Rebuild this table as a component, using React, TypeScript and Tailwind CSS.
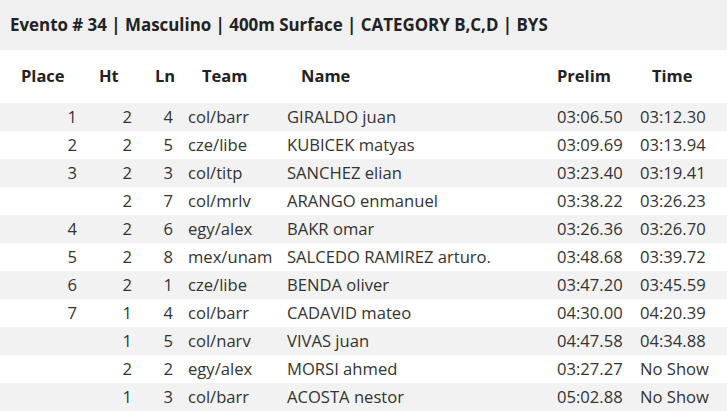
import React from 'react'

type Row = {
    place: string;
    ht: string;
    ln: string;
    team: string;
    name: string;
    prelim: string;
    time: string;
};

const rows: Row[] = [
    { place: '1', ht: '2', ln: '4', team: 'col/barr', name: 'GIRALDO juan', prelim: '03:06.50', time: '03:12.30' },
    { place: '2', ht: '2', ln: '5', team: 'cze/libe', name: 'KUBICEK matyas', prelim: '03:09.69', time: '03:13.94' },
    { place: '3', ht: '2', ln: '3', team: 'col/titp', name: 'SANCHEZ elian', prelim: '03:23.40', time: '03:19.41' },
    { place: '', ht: '2', ln: '7', team: 'col/mrlv', name: 'ARANGO enmanuel', prelim: '03:38.22', time: '03:26.23' },
    { place: '4', ht: '2', ln: '6', team: 'egy/alex', name: 'BAKR omar', prelim: '03:26.36', time: '03:26.70' },
    { place: '5', ht: '2', ln: '8', team: 'mex/unam', name: 'SALCEDO RAMIREZ arturo.', prelim: '03:48.68', time: '03:39.72' },
    { place: '6', ht: '2', ln: '1', team: 'cze/libe', name: 'BENDA oliver', prelim: '03:47.20', time: '03:45.59' },
    { place: '7', ht: '1', ln: '4', team: 'col/barr', name: 'CADAVID mateo', prelim: '04:30.00', time: '04:20.39' },
    { place: '', ht: '1', ln: '5', team: 'col/narv', name: 'VIVAS juan', prelim: '04:47.58', time: '04:34.88' },
    { place: '', ht: '2', ln: '2', team: 'egy/alex', name: 'MORSI ahmed', prelim: '03:27.27', time: 'No Show' },
    { place: '', ht: '1', ln: '3', team: 'col/barr', name: 'ACOSTA nestor', prelim: '05:02.88', time: 'No Show' },
];

const cols = 'grid grid-cols-[82px_55px_46px_98px_264px_85px_97px]';

const App = () => {
    return (
        <div className="w-[727px] h-[411px] overflow-hidden bg-white text-[#333] font-['Open_Sans',sans-serif]">
            <div className="h-[50px] bg-[#f0f0f0] flex items-center px-[10px]">
                <h2 className="text-[16.9px] font-bold text-[#222] leading-none">
                    Evento # 34 | Masculino | 400m Surface | CATEGORY B,C,D | BYS
                </h2>
            </div>
            <div className={`${cols} h-[53px] items-center text-[16.5px] font-bold text-[#222]`}>
                <div className="pl-[21px]">Place</div>
                <div className="pl-[17px]">Ht</div>
                <div className="pl-[18px]">Ln</div>
                <div className="pl-[19px]">Team</div>
                <div className="pl-[20px]">Name</div>
                <div className="pl-[12px]">Prelim</div>
                <div className="pl-[22px]">Time</div>
            </div>
            {rows.map((r, i) => (
                <div
                    key={i}
                    className={`${cols} h-[28px] items-center text-[16.6px] ${i % 2 === 0 ? 'bg-[#f2f2f2]' : 'bg-white'}`}
                >
                    <div className="text-right pr-[5px]">{r.place}</div>
                    <div className="text-right pr-[5px]">{r.ht}</div>
                    <div className="text-right pr-[10px]">{r.ln}</div>
                    <div className="pl-[5px] whitespace-nowrap">{r.team}</div>
                    <div className="pl-[6px] whitespace-nowrap">{r.name}</div>
                    <div className="pl-[12px] whitespace-nowrap">{r.prelim}</div>
                    <div className="pl-[10px] whitespace-nowrap">{r.time}</div>
                </div>
            ))}
        </div>
    )
}

export default App
